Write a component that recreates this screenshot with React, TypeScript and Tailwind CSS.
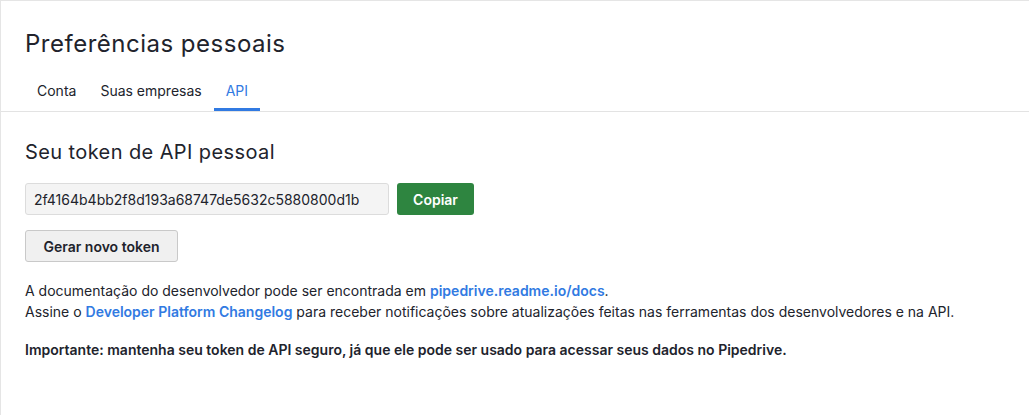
export default function App() {
  const tabs = ["Conta", "Suas empresas", "API"]
  const active = "API"

  return (
    <div className="h-[415px] w-full border-t border-l border-[#e5e5e5] bg-white font-[family-name:Inter,sans-serif] text-[#21232c]">
      {/* Cabeçalho */}
      <div className="border-b border-[#e3e3e3]">
        <h1 className="px-6 pt-[27px] text-[24px] leading-[32px] font-normal tracking-[0.5px]">Preferências pessoais</h1>
        <nav className="mt-[21px] flex px-6">
          {tabs.map((tab) => (
            <div
              key={tab}
              className={
                tab === active
                  ? "border-b-[3px] border-[#317ae2] px-3 pt-[1px] pb-[8px] text-[14px] leading-[18px] text-[#317ae2]"
                  : "border-b-[3px] border-transparent px-3 pt-[1px] pb-[8px] text-[14px] leading-[18px]"
              }
            >
              {tab}
            </div>
          ))}
        </nav>
      </div>

      <div className="px-6 pt-[28px]">
        <h2 className="text-[20px] leading-[24px] font-normal tracking-[0.4px]">Seu token de API pessoal</h2>

        <div className="mt-[19px] flex gap-[8px]">
          <div className="flex h-[32px] w-[364px] items-center rounded-[3px] border border-[#dcdcdc] bg-[#f4f4f4] px-2 text-[14px]">
            2f4164b4bb2f8d193a68747de5632c5880800d1b
          </div>
          <button className="h-[32px] w-[77px] rounded-[3px] bg-[#2e8540] text-[14px] font-semibold text-white">
            Copiar
          </button>
        </div>

        <button className="mt-[15px] h-[32px] w-[153px] rounded-[3px] border border-[#c9c9c9] bg-[#f0f0f0] text-[14px] font-semibold">
          Gerar novo token
        </button>

        <div className="mt-[18px] text-[14px] leading-[21px]">
          <p>
            A documentação do desenvolvedor pode ser encontrada em{" "}
            <a className="font-semibold text-[#317ae2]">pipedrive.readme.io/docs</a>.
          </p>
          <p>
            Assine o <a className="font-semibold text-[#317ae2]">Developer Platform Changelog</a> para receber
            notificações sobre atualizações feitas nas ferramentas dos desenvolvedores e na API.
          </p>
          <p className="mt-[17px] font-semibold">
            Importante: mantenha seu token de API seguro, já que ele pode ser usado para acessar seus dados no
            Pipedrive.
          </p>
        </div>
      </div>
    </div>
  )
}
